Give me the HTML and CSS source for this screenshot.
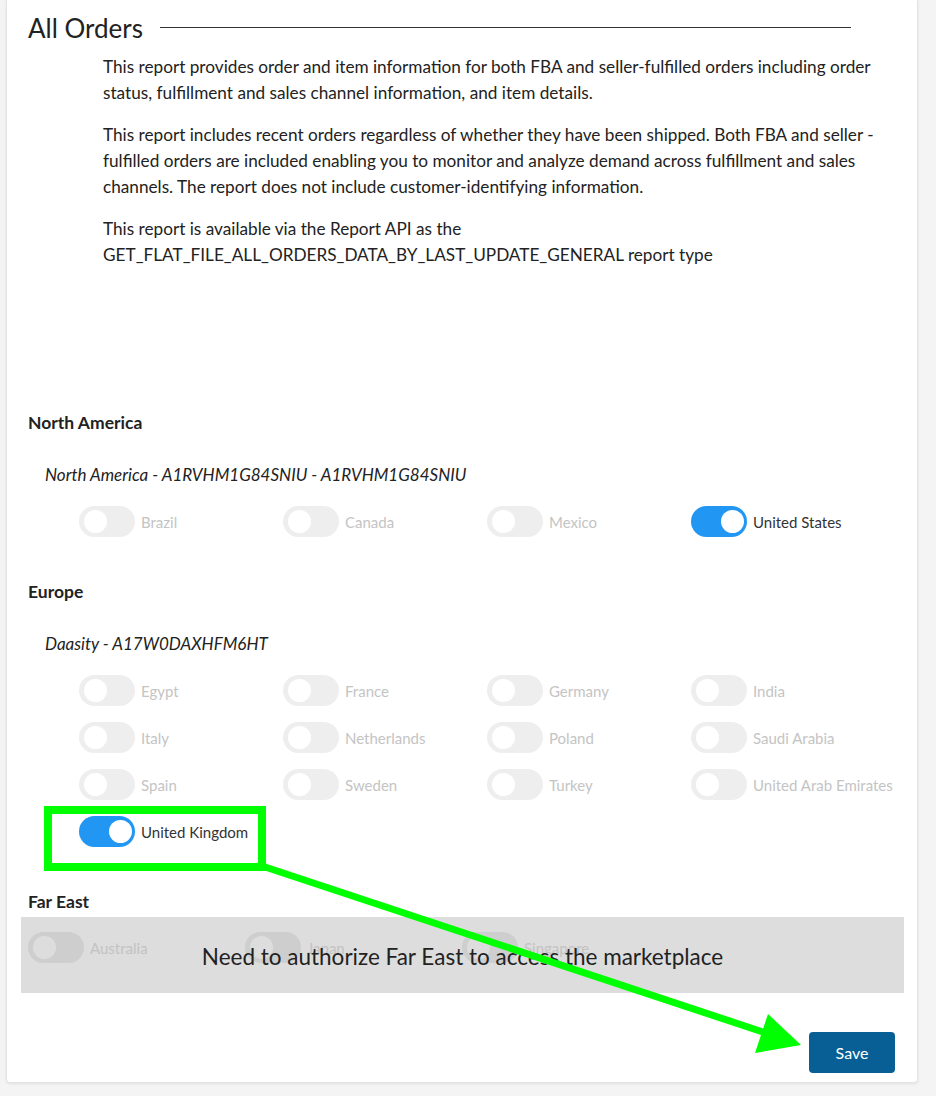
FILE: index.html
```html
<!DOCTYPE html>
<html lang="en">
<head>
  <meta charset="UTF-8" />
  <meta name="viewport" content="width=device-width, initial-scale=1" />
  <title>All Orders | Report Settings</title>
  <link rel="stylesheet" href="styles.css">
</head>
<body>
  <div class="card">
    <header class="report-head">
      <h1>All Orders</h1>
      <span class="head-rule"></span>
    </header>

    <div class="report-desc">
      <p>This report provides order and item information for both FBA and seller-fulfilled orders including order status, fulfillment and sales channel information, and item details.</p>
      <p>This report includes recent orders regardless of whether they have been shipped. Both FBA and seller - fulfilled orders are included enabling you to monitor and analyze demand across fulfillment and sales channels. The report does not include customer-identifying information.</p>
      <p>This report is available via the Report API as the GET_FLAT_FILE_ALL_ORDERS_DATA_BY_LAST_UPDATE_GENERAL report type</p>
    </div>

    <!-- North America -->
    <section class="region">
      <h2>North America</h2>
      <p class="account">North America - A1RVHM1G84SNIU - A1RVHM1G84SNIU</p>
      <div class="markets">
        <label class="market"><span class="switch"></span>Brazil</label>
        <label class="market"><span class="switch"></span>Canada</label>
        <label class="market"><span class="switch"></span>Mexico</label>
        <label class="market on"><span class="switch"></span>United States</label>
      </div>
    </section>

    <!-- Europe -->
    <section class="region">
      <h2>Europe</h2>
      <p class="account">Daasity - A17W0DAXHFM6HT</p>
      <div class="markets">
        <label class="market"><span class="switch"></span>Egypt</label>
        <label class="market"><span class="switch"></span>France</label>
        <label class="market"><span class="switch"></span>Germany</label>
        <label class="market"><span class="switch"></span>India</label>
        <label class="market"><span class="switch"></span>Italy</label>
        <label class="market"><span class="switch"></span>Netherlands</label>
        <label class="market"><span class="switch"></span>Poland</label>
        <label class="market"><span class="switch"></span>Saudi Arabia</label>
        <label class="market"><span class="switch"></span>Spain</label>
        <label class="market"><span class="switch"></span>Sweden</label>
        <label class="market"><span class="switch"></span>Turkey</label>
        <label class="market"><span class="switch"></span>United Arab Emirates</label>
        <label class="market on"><span class="switch"></span>United Kingdom</label>
      </div>
    </section>

    <!-- Far East (locked) -->
    <section class="region">
      <h2>Far East</h2>
      <div class="locked">
        <div class="markets far">
          <label class="market"><span class="switch"></span>Australia</label>
          <label class="market"><span class="switch"></span>Japan</label>
          <label class="market"><span class="switch"></span>Singapore</label>
        </div>
        <div class="locked-msg">Need to authorize Far East to access the marketplace</div>
      </div>
    </section>

    <div class="actions">
      <button class="save-btn">Save</button>
    </div>
  </div>

  <!-- annotation -->
  <svg class="annotation" width="936" height="1096" viewBox="0 0 936 1096">
    <rect x="48" y="810" width="214" height="57" fill="none" stroke="#00ff00" stroke-width="8" />
    <line x1="262" y1="866" x2="772" y2="1035" stroke="#00ff00" stroke-width="7" />
    <polygon points="768,1014 801,1045 755,1053" fill="#00ff00" />
  </svg>
</body>
</html>
```

FILE: styles.css
```css
body {
  font-family: 'Lato', 'Liberation Sans', sans-serif;
  background: #f4f4f4;
  color: #222;
  margin: 0;
  padding: 0;
  position: relative;
  min-height: 1096px;
}
.card {
  background: #fff;
  margin: 0 18px 0 6px;
  padding: 0 22px 9px 21px;
  border: 1px solid #e4e4e4;
  border-top: none;
  border-radius: 0 0 4px 4px;
  box-shadow: 0 1px 3px rgba(0,0,0,0.08);
}
.report-head {
  height: 54px;
  display: flex;
  align-items: center;
  gap: 17px;
  margin-right: 44px;
}
.report-head h1 {
  font-size: 26px;
  font-weight: normal;
  color: #222;
  margin: 0;
  line-height: 30px;
  padding-top: 1px;
}
.head-rule {
  flex-grow: 1;
  height: 1px;
  background: #333;
}
.report-desc {
  padding: 0 10px 0 75px;
  margin-bottom: 144px;
}
.report-desc p {
  font-size: 17.2px;
  line-height: 26px;
  margin: 0 0 16px 0;
  color: #222;
}
.report-desc p:last-child {
  margin-bottom: 0;
}
/* marketplaces */
.region {
  margin-bottom: 44px;
}
.region:last-of-type {
  margin-bottom: 0;
}
.region h2 {
  font-size: 17.5px;
  font-weight: bold;
  line-height: 22px;
  margin: 0;
  color: #222;
}
.account {
  font-size: 17px;
  font-style: italic;
  line-height: 22px;
  margin: 30px 0 20px 17px;
  color: #222;
}
.markets {
  display: grid;
  grid-template-columns: repeat(4, 204px);
  row-gap: 16px;
  padding-left: 51px;
}
.market {
  display: flex;
  align-items: center;
  gap: 6px;
  font-size: 15px;
  color: #c4c4c4;
  height: 31px;
  white-space: nowrap;
}
.switch {
  position: relative;
  width: 56px;
  height: 31px;
  border-radius: 16px;
  background: #eeeeee;
  flex-shrink: 0;
}
.switch::after {
  content: '';
  position: absolute;
  top: 4px;
  left: 5px;
  width: 23px;
  height: 23px;
  border-radius: 50%;
  background: #fff;
}
.market.on {
  color: #333;
}
.market.on .switch {
  background: #2196f3;
}
.market.on .switch::after {
  left: auto;
  right: 3px;
}
/* locked region */
.locked {
  position: relative;
  margin: 4px -9px 0 -7px;
  height: 76px;
  background: #fff;
}
.markets.far {
  grid-template-columns: repeat(3, 217px);
  padding: 15px 0 0 7px;
}
.markets.far .market {
  color: #e2e2e2;
}
.locked-msg {
  position: absolute;
  top: 0; left: 0; right: 0; bottom: 0;
  background: rgba(0,0,0,0.135);
  display: flex;
  align-items: center;
  justify-content: center;
  padding-top: 2px;
  font-size: 22.5px;
  color: #222;
}
.actions {
  display: flex;
  justify-content: flex-end;
  margin-top: 39px;
}
.save-btn {
  font-family: inherit;
  font-size: 16px;
  color: #fff;
  background: #075f96;
  border: none;
  border-radius: 4px;
  width: 86px;
  height: 41px;
  cursor: pointer;
}
.annotation {
  position: absolute;
  top: 0;
  left: 0;
  pointer-events: none;
}
```
